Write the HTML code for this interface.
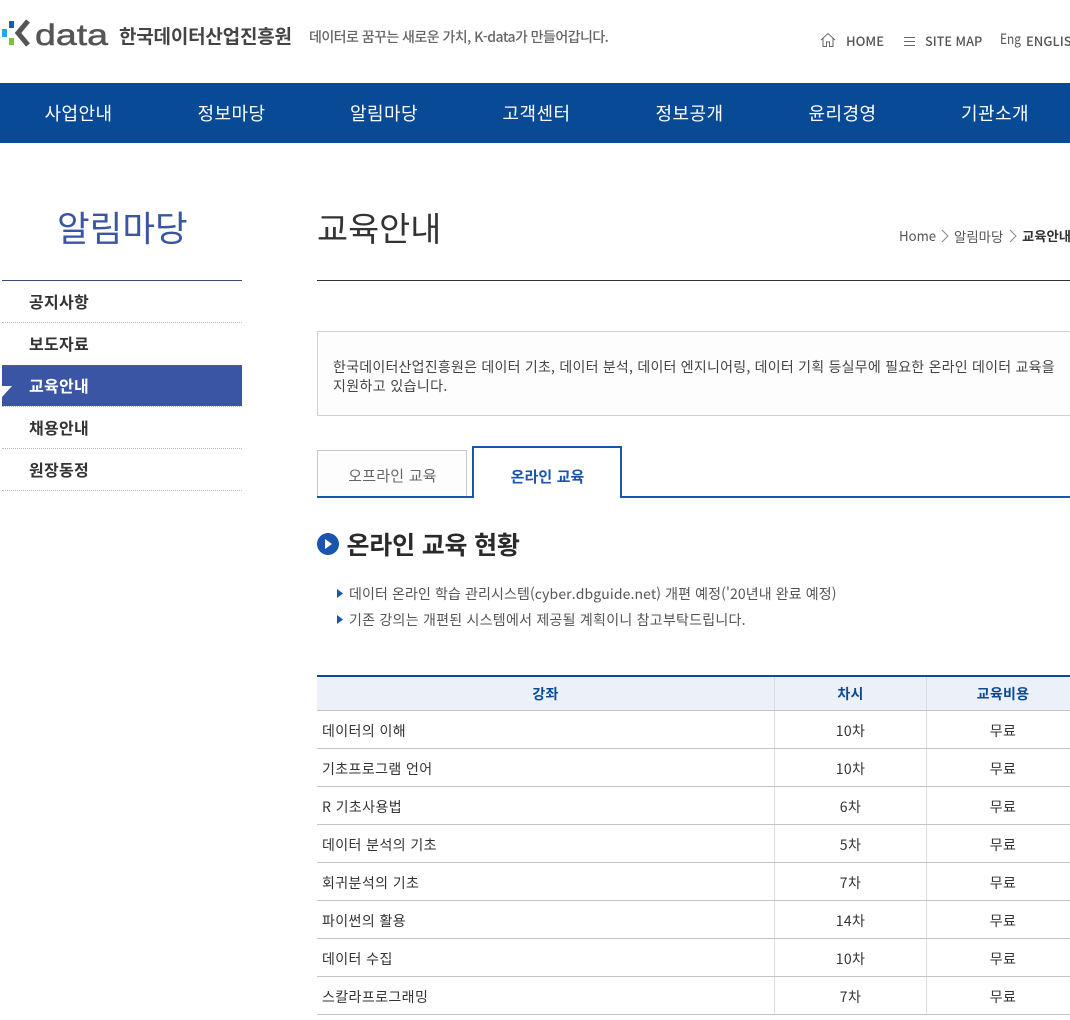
<!DOCTYPE html>
<html lang="ko"><head><meta charset="utf-8"><title>교육안내</title>
<style>
html,body{margin:0;padding:0;background:#fff}
#p{position:relative;width:1070px;height:1020px;overflow:hidden;background:#fff;font-family:"Liberation Sans","Noto Sans CJK KR",sans-serif}
.t{position:absolute;white-space:nowrap;font-family:"Noto Sans CJK KR","Liberation Sans",sans-serif;line-height:24px;height:24px}
.c{transform:translateX(-50%)}
.b{position:absolute}
.n{color:#fff;font-size:18px;letter-spacing:.45px;top:101px}
.m{left:29px;font-size:16px;font-weight:700;color:#333;letter-spacing:.28px}
.d{position:absolute;left:2px;width:240px;height:0;border-top:1px dotted #bbb}
.r{position:absolute;left:317px;width:753px;height:1px;background:#c4c4c4}
.cell{font-size:14px;color:#333;letter-spacing:.4px}
.th{font-size:14px;font-weight:700;color:#0a4b98;top:682px;letter-spacing:.3px}
</style></head><body><div id="p">

<svg class="b" style="left:0;top:15px" width="120" height="40" viewBox="0 15 120 40">
<rect x="9" y="21" width="5" height="7" fill="#1a5cab"/>
<rect x="2" y="29" width="5" height="8" fill="#2aa6e0"/>
<rect x="9" y="38" width="5" height="7" fill="#7cc242"/>
<polyline points="28,21 18,33 28,45" fill="none" stroke="#555" stroke-width="5"/>
<text x="35" y="45" font-family="Liberation Sans" font-size="30" fill="#555" stroke="#555" stroke-width=".5" textLength="73" lengthAdjust="spacingAndGlyphs">data</text>
</svg>
<div class="t" style="left:119px;top:24px;font-size:19px;font-weight:700;color:#444;letter-spacing:-.2px">한국데이터산업진흥원</div>
<div class="t" style="left:309px;top:25px;font-size:14px;font-weight:500;color:#666;letter-spacing:-.55px">데이터로 꿈꾸는 새로운 가치, K-data가 만들어갑니다.</div>

<svg class="b" style="left:820px;top:32px" width="16" height="16" viewBox="0 0 16 16" fill="none" stroke="#666" stroke-width="1"><path d="M1 8 8 1.5 15 8M3 6.5V14.500H6.500V10H9.500V14.500H13V6.500"/></svg>
<div class="t" style="left:846px;top:29px;font-size:13px;font-weight:500;color:#555">HOME</div>
<div class="b" style="left:904px;top:37px;width:11px;height:1px;background:#666"></div>
<div class="b" style="left:904px;top:41px;width:11px;height:1px;background:#666"></div>
<div class="b" style="left:904px;top:45px;width:11px;height:1px;background:#666"></div>
<div class="t" style="left:925px;top:29px;font-size:12.700px;font-weight:500;color:#555">SITE MAP</div>
<div class="t" style="left:1000px;top:27px;font-size:14px;color:#555;transform-origin:left;transform:scaleX(.85)">Eng</div>
<div class="t" style="left:1026px;top:29px;font-size:13px;font-weight:500;color:#555">ENGLISH</div>

<div class="b" style="left:0;top:83px;width:1070px;height:60px;background:#084a96"></div>
<div class="t n c" style="left:78.500px">사업안내</div>
<div class="t n c" style="left:231.500px">정보마당</div>
<div class="t n c" style="left:384px">알림마당</div>
<div class="t n c" style="left:536.500px">고객센터</div>
<div class="t n c" style="left:689.500px">정보공개</div>
<div class="t n c" style="left:842.500px">윤리경영</div>
<div class="t n c" style="left:995px">기관소개</div>

<div class="t" style="left:57px;top:215px;font-size:35.500px;color:#3a55a3">알림마당</div>
<div class="b" style="left:2px;top:280px;width:240px;height:1px;background:#3b4a75"></div>
<div class="t m" style="top:289px">공지사항</div>
<div class="d" style="top:322px"></div>
<div class="t m" style="top:331px">보도자료</div>
<div class="b" style="left:2px;top:365px;width:240px;height:41px;background:#3a55a3;border-top:1px solid #555b70;box-sizing:border-box"></div>
<svg class="b" style="left:2px;top:386px" width="10" height="11"><polygon points="0,0 10,0 0,11" fill="#fff"/></svg>
<div class="t m" style="top:373px;color:#fff">교육안내</div>
<div class="d" style="top:406px"></div>
<div class="t m" style="top:415px">채용안내</div>
<div class="d" style="top:448px"></div>
<div class="t m" style="top:457px">원장동정</div>
<div class="d" style="top:490px"></div>

<div class="t" style="left:317px;top:215px;font-size:33.800px;color:#333">교육안내</div>
<div class="t" style="left:899px;top:224px;font-size:13.200px;color:#555">Home</div>
<svg class="b" style="left:941px;top:229px" width="8" height="14" fill="none" stroke="#888"><path d="M1 1 7 7 1 13"/></svg>
<div class="t" style="left:954px;top:224px;font-size:13.400px;color:#555">알림마당</div>
<svg class="b" style="left:1009px;top:229px" width="8" height="14" fill="none" stroke="#888"><path d="M1 1 7 7 1 13"/></svg>
<div class="t" style="left:1022px;top:224px;font-size:13.300px;font-weight:700;color:#333">교육안내</div>
<div class="b" style="left:317px;top:280px;width:753px;height:1px;background:#333"></div>

<div class="b" style="left:317px;top:331px;width:770px;height:85px;box-sizing:border-box;border:1px solid #d0d0d0;background:#fdfdfd"></div>
<div class="t" style="left:333px;top:355px;font-size:14px;color:#444;letter-spacing:.23px">한국데이터산업진흥원은 데이터 기초, 데이터 분석, 데이터 엔지니어링, 데이터 기획 등실무에 필요한 온라인 데이터 교육을</div>
<div class="t" style="left:333px;top:374px;font-size:14px;color:#444;letter-spacing:.38px">지원하고 있습니다.</div>

<div class="b" style="left:317px;top:450px;width:150px;height:47px;box-sizing:border-box;border:1px solid #c8c8c8;border-bottom:0;background:#fdfdfd"></div>
<div class="b" style="left:317px;top:496px;width:155px;height:2px;background:#1a55ad"></div>
<div class="b" style="left:472px;top:446px;width:150px;height:52px;box-sizing:border-box;border:2px solid #1a55ad;border-bottom:0;background:#fff"></div>
<div class="b" style="left:622px;top:496px;width:448px;height:2px;background:#1a55ad"></div>
<div class="t c" style="left:392.500px;top:464px;font-size:15px;color:#666;letter-spacing:.2px">오프라인 교육</div>
<div class="t c" style="left:547.500px;top:465px;font-size:15px;font-weight:700;color:#1a55ad;letter-spacing:.1px">온라인 교육</div>

<svg class="b" style="left:317px;top:533px" width="22" height="22"><circle cx="11" cy="11" r="11" fill="#1a55ad"/><polygon points="8,6 15,11 8,16" fill="#fff"/></svg>
<div class="t" style="left:346.500px;top:532px;font-size:25px;font-weight:700;color:#2a2a2a;letter-spacing:-.2px">온라인 교육 현황</div>

<svg class="b" style="left:337px;top:589px" width="6" height="9"><polygon points="0,0 6,4.500 0,9" fill="#1a55ad"/></svg>
<div class="t" style="left:349px;top:582px;font-size:14px;color:#555;letter-spacing:.11px">데이터 온라인 학습 관리시스템(cyber.dbguide.net) 개편 예정('20년내 완료 예정)</div>
<svg class="b" style="left:337px;top:615px" width="6" height="9"><polygon points="0,0 6,4.500 0,9" fill="#1a55ad"/></svg>
<div class="t" style="left:349px;top:608px;font-size:14px;color:#555;letter-spacing:.25px">기존 강의는 개편된 시스템에서 제공될 계획이니 참고부탁드립니다.</div>

<div class="b" style="left:317px;top:677px;width:753px;height:33px;background:#ebf0f9"></div>
<div class="b" style="left:317px;top:675px;width:753px;height:2px;background:#0a4b98"></div>
<div class="b" style="left:774px;top:677px;width:1px;height:338px;background:#ddd"></div>
<div class="b" style="left:926px;top:677px;width:1px;height:338px;background:#ddd"></div>
<div class="r" style="top:710px"></div><div class="r" style="top:748px"></div><div class="r" style="top:786px"></div><div class="r" style="top:824px"></div><div class="r" style="top:862px"></div><div class="r" style="top:900px"></div><div class="r" style="top:938px"></div><div class="r" style="top:976px"></div><div class="r" style="top:1014px"></div>
<div class="t th c" style="left:545.500px">강좌</div><div class="t th c" style="left:850.500px">차시</div><div class="t th c" style="left:1003px">교육비용</div>

<div class="t cell" style="left:322px;top:719px">데이터의 이해</div><div class="t cell c" style="left:850.500px;top:719px">10차</div><div class="t cell c" style="left:1003px;top:719px">무료</div>
<div class="t cell" style="left:322px;top:757px">기초프로그램 언어</div><div class="t cell c" style="left:850.500px;top:757px">10차</div><div class="t cell c" style="left:1003px;top:757px">무료</div>
<div class="t cell" style="left:322px;top:795px">R 기초사용법</div><div class="t cell c" style="left:850.500px;top:795px">6차</div><div class="t cell c" style="left:1003px;top:795px">무료</div>
<div class="t cell" style="left:322px;top:833px">데이터 분석의 기초</div><div class="t cell c" style="left:850.500px;top:833px">5차</div><div class="t cell c" style="left:1003px;top:833px">무료</div>
<div class="t cell" style="left:322px;top:871px">회귀분석의 기초</div><div class="t cell c" style="left:850.500px;top:871px">7차</div><div class="t cell c" style="left:1003px;top:871px">무료</div>
<div class="t cell" style="left:322px;top:909px">파이썬의 활용</div><div class="t cell c" style="left:850.500px;top:909px">14차</div><div class="t cell c" style="left:1003px;top:909px">무료</div>
<div class="t cell" style="left:322px;top:947px">데이터 수집</div><div class="t cell c" style="left:850.500px;top:947px">10차</div><div class="t cell c" style="left:1003px;top:947px">무료</div>
<div class="t cell" style="left:322px;top:985px">스칼라프로그래밍</div><div class="t cell c" style="left:850.500px;top:985px">7차</div><div class="t cell c" style="left:1003px;top:985px">무료</div>
</div></body></html>
